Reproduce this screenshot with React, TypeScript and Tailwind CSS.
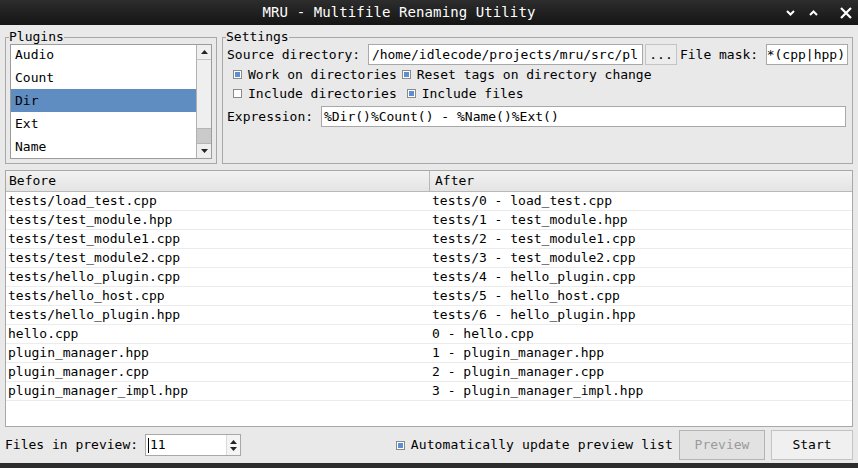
import { ReactNode } from 'react';

// Sample data for the rename preview
const rows = [
  ['tests/load_test.cpp', 'tests/0 - load_test.cpp'],
  ['tests/test_module.hpp', 'tests/1 - test_module.hpp'],
  ['tests/test_module1.cpp', 'tests/2 - test_module1.cpp'],
  ['tests/test_module2.cpp', 'tests/3 - test_module2.cpp'],
  ['tests/hello_plugin.cpp', 'tests/4 - hello_plugin.cpp'],
  ['tests/hello_host.cpp', 'tests/5 - hello_host.cpp'],
  ['tests/hello_plugin.hpp', 'tests/6 - hello_plugin.hpp'],
  ['hello.cpp', '0 - hello.cpp'],
  ['plugin_manager.hpp', '1 - plugin_manager.hpp'],
  ['plugin_manager.cpp', '2 - plugin_manager.cpp'],
  ['plugin_manager_impl.hpp', '3 - plugin_manager_impl.hpp'],
];

const plugins = ['Audio', 'Count', 'Dir', 'Ext', 'Name'];

const Check = ({ checked, label }: { checked: boolean; label: string }) => (
  <div className="flex items-center">
    <span className="w-[9px] h-[9px] border border-[#8a8a8a] bg-white flex items-center justify-center mr-[6px]">
      {checked && <span className="w-[5px] h-[5px] bg-[#5b8fd2]" />}
    </span>
    <span>{label}</span>
  </div>
);

const Group = ({ title, className, children }: { title: string; className: string; children: ReactNode }) => (
  <fieldset className={`border border-[#a8a8a8] px-[4px] pb-[3px] min-w-0 ${className}`}>
    <legend className="leading-[14px] -ml-px">{title}</legend>
    {children}
  </fieldset>
);

const Arrow = ({ up }: { up: boolean }) => (
  <svg width="7" height="4" viewBox="0 0 7 4">
    <path d={up ? 'M0 4 L3.5 0 L7 4 Z' : 'M0 0 L7 0 L3.5 4 Z'} fill="#222" />
  </svg>
);

export default function App() {
  return (
    <div className="w-[858px] h-[468px] bg-[#e9e9e9] flex flex-col text-[13px] text-black font-['DejaVu_Sans_Mono',monospace] overflow-hidden">
      {/* Title bar */}
      <div className="h-[25px] bg-gradient-to-b from-[#2d2d2d] to-[#151515] relative flex items-center justify-center pr-[60px]">
        <span className="text-white text-[14px] tracking-[0.1px]">MRU - Multifile Renaming Utility</span>
        <div className="absolute right-[6px] top-0 h-full flex items-center gap-[14px]">
          <svg width="9" height="6" viewBox="0 0 9 6"><path d="M1 1 L4.5 4.5 L8 1" stroke="white" strokeWidth="2" fill="none" /></svg>
          <svg width="9" height="6" viewBox="0 0 9 6"><path d="M1 5 L4.5 1.5 L8 5" stroke="white" strokeWidth="2" fill="none" /></svg>
          <svg width="12" height="12" viewBox="0 0 12 12" className="ml-[8px]"><path d="M1 1 L11 11 M11 1 L1 11" stroke="white" strokeWidth="2.2" /></svg>
        </div>
      </div>

      <div className="flex-1 flex flex-col px-[5px]">
        {/* Plugins + settings */}
        <div className="flex gap-[5px] mt-[5px] h-[134px]">
          <Group title="Plugins" className="w-[212px] flex">
            <div className="flex-1 flex border border-[#9c9c9c] bg-white mb-[1px]">
              <div className="flex-1 flex flex-col overflow-hidden">
                <div className="-mt-[2px]">
                  {plugins.map((p) => (
                    <div key={p} className={`h-[23px] leading-[23px] pl-[4px] ${p === 'Dir' ? 'bg-[#5f8dc2]' : ''}`}>{p}</div>
                  ))}
                </div>
              </div>
              <div className="w-[15px] border-l border-[#b0b0b0] bg-[#efefef] flex flex-col">
                <div className="h-[15px] border-b border-[#c4c4c4] flex items-center justify-center"><Arrow up /></div>
                <div className="flex-1 flex flex-col justify-end">
                  <div className="h-[16px] bg-[#cacaca] border-y border-[#b4b4b4]" />
                </div>
                <div className="h-[14px] flex items-center justify-center"><Arrow up={false} /></div>
              </div>
            </div>
          </Group>

          <Group title="Settings" className="flex-1 flex flex-col">
            <div className="flex items-center h-[21px]">
              <span className="whitespace-pre">Source directory: </span>
              <div className="w-[277px] h-[21px] bg-white border border-[#a8a8a8] pl-[3px] leading-[19px] overflow-hidden whitespace-nowrap">/home/idlecode/projects/mru/src/pl</div>
              <div className="w-[32px] h-[21px] ml-[2px] border border-[#c4c4c4] bg-[#ececec] text-center leading-[19px]">...</div>
              <span className="whitespace-pre ml-[3px]">File mask: </span>
              <div className="w-[82px] h-[21px] bg-white border border-[#a8a8a8] leading-[19px] whitespace-nowrap flex justify-end pr-[2px]">*(cpp|hpp)</div>
            </div>
            <div className="flex items-center h-[19px] pl-[6px]">
              <Check checked label="Work on directories" />
              <div className="ml-[5px]"><Check checked label="Reset tags on directory change" /></div>
            </div>
            <div className="flex items-center h-[19px] pl-[6px]">
              <Check checked={false} label="Include directories" />
              <div className="ml-[10px]"><Check checked label="Include files" /></div>
            </div>
            <div className="flex items-center h-[21px] mt-[3px]">
              <span className="whitespace-pre">Expression: </span>
              <div className="flex-1 h-[21px] bg-white border border-[#a8a8a8] pl-[2px] leading-[19px] mr-[2px]">%Dir()%Count() - %Name()%Ext()</div>
            </div>
          </Group>
        </div>

        {/* Preview table */}
        <div className="mt-[6px] h-[257px] border border-[#a8a8a8] bg-white flex flex-col">
          <div className="h-[21px] flex bg-gradient-to-b from-[#f2f2f2] to-[#e4e4e4] border-b border-[#b8b8b8] leading-[20px]">
            <div className="w-[424px] pl-[3px] border-r border-[#b8b8b8]">Before</div>
            <div className="flex-1 pl-[5px]">After</div>
          </div>
          {rows.map(([before, after]) => (
            <div key={before} className="h-[19px] flex border-b border-[#ececec] leading-[18px]">
              <div className="w-[424px] pl-[2px]">{before}</div>
              <div className="flex-1 pl-[2px]">{after}</div>
            </div>
          ))}
        </div>

        {/* Bottom controls */}
        <div className="flex-1 flex items-center">
          <span className="whitespace-pre">Files in preview: </span>
          <div className="w-[96px] h-[22px] bg-white border border-[#a8a8a8] flex ml-[-1px]">
            <div className="flex-1 flex items-center pl-[2px]">
              <span className="w-px h-[15px] bg-black mr-px" />11
            </div>
            <div className="w-[14px] flex flex-col items-center justify-center gap-[3px] border-l border-[#dadada] bg-[#f4f4f4]">
              <Arrow up />
              <Arrow up={false} />
            </div>
          </div>
          <div className="ml-auto mr-[6px] tracking-[0.12px]"><Check checked label="Automatically update preview list" /></div>
          <div className="w-[86px] h-[30px] border border-[#b4b4b4] bg-[#e2e2e2] text-[#9a9a9a] flex items-center justify-center">Preview</div>
          <div className="w-[82px] h-[30px] ml-[6px] border border-[#c4c4c4] bg-[#f0f0f0] flex items-center justify-center">Start</div>
        </div>
      </div>
      <div className="h-[5px] bg-[#2c2c2c]" />
    </div>
  );
}
